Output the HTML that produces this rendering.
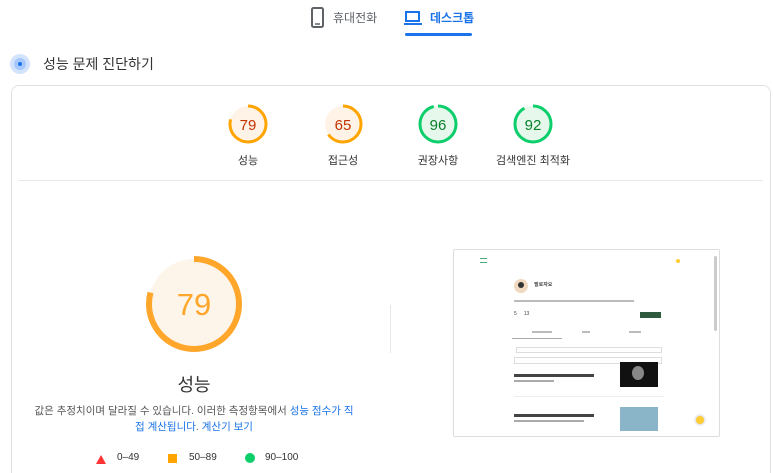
<!DOCTYPE html>
<html><head><meta charset="utf-8"><style>
*{margin:0;padding:0;box-sizing:border-box}
html,body{width:773px;height:473px;overflow:hidden}
body{background:#fff;font-family:"Liberation Sans","Noto Sans CJK KR",sans-serif;color:#202124;position:relative}
.a{position:absolute}
.g text{font-family:"Liberation Sans",sans-serif}
.lbl{position:absolute;font-size:11px;color:#333;width:100px;text-align:center}
</style></head><body>
<svg class="a" style="left:310px;top:7px" width="16" height="22" viewBox="0 0 16 22"><rect x="2" y="1" width="11" height="19" rx="1.5" fill="none" stroke="#5f6368" stroke-width="2"/><line x1="5" y1="17" x2="10" y2="17" stroke="#5f6368" stroke-width="1.5"/></svg>
<div class="a" style="left:333px;top:9px;font-size:12px;color:#5f6368">휴대전화</div>
<svg class="a" style="left:404px;top:10px" width="18" height="16" viewBox="0 0 18 16"><rect x="2" y="2" width="13" height="9" fill="none" stroke="#1a73e8" stroke-width="2"/><line x1="0" y1="14" x2="18" y2="14" stroke="#1a73e8" stroke-width="2"/></svg>
<div class="a" style="left:430px;top:9px;font-size:12px;color:#1a73e8;font-weight:bold">데스크톱</div>
<div class="a" style="left:405px;top:33px;width:67px;height:3px;background:#1a73e8;border-radius:2px"></div>
<svg class="a" style="left:9px;top:53px" width="22" height="22"><circle cx="11" cy="11" r="10" fill="#d2e3fc"/><circle cx="11" cy="11" r="6" fill="#a8c7fa"/><circle cx="11" cy="11" r="2" fill="#1a73e8"/></svg>
<div class="a" style="left:43px;top:54px;font-size:14px;color:#333">성능 문제 진단하기</div>
<div class="a" style="left:11px;top:85px;width:760px;height:398px;border:1px solid #e0e0e0;border-radius:8px"></div>
<div class="a" style="left:18px;top:180px;width:745px;height:1px;background:#e8e8e8"></div>
<svg class="a g" style="left:0;top:0" width="773" height="473">
<g transform="translate(248,124)"><circle r="18" fill="#fef3e6"/><circle r="18" fill="none" stroke="#ffa400" stroke-width="3" stroke-dasharray="89.4 200" transform="rotate(-90)"/><text y="6" text-anchor="middle" font-size="15" fill="#c33300">79</text></g>
<g transform="translate(343,124)"><circle r="18" fill="#fef3e6"/><circle r="18" fill="none" stroke="#ffa400" stroke-width="3" stroke-dasharray="73.5 200" transform="rotate(-90)"/><text y="6" text-anchor="middle" font-size="15" fill="#c33300">65</text></g>
<g transform="translate(438,124)"><circle r="18" fill="#e6f7ec"/><circle r="18" fill="none" stroke="#0cce6b" stroke-width="3" stroke-dasharray="108.6 200" transform="rotate(-90)"/><text y="6" text-anchor="middle" font-size="15" fill="#08802c">96</text></g>
<g transform="translate(533,124)"><circle r="18" fill="#e6f7ec"/><circle r="18" fill="none" stroke="#0cce6b" stroke-width="3" stroke-dasharray="104 200" transform="rotate(-90)"/><text y="6" text-anchor="middle" font-size="15" fill="#08802c">92</text></g>
<g transform="translate(194,304)"><circle r="45" fill="#fef5ea"/><circle r="45" fill="none" stroke="#ffa62b" stroke-width="6" stroke-dasharray="223.4 400" transform="rotate(-90)"/><text y="11" text-anchor="middle" font-size="31" fill="#ffa62b">79</text></g>
<polygon points="96,464 101,455 106,464" fill="#ff3333"/>
<rect x="168" y="454" width="9" height="9" fill="#ffa400"/>
<circle cx="250" cy="458" r="5" fill="#0cce6b"/>
</svg>
<div class="lbl" style="left:198px;top:152px">성능</div>
<div class="lbl" style="left:293px;top:152px">접근성</div>
<div class="lbl" style="left:388px;top:152px">권장사항</div>
<div class="lbl" style="left:483px;top:152px">검색엔진 최적화</div>
<div class="a" style="left:94px;top:371px;width:200px;text-align:center;font-size:18px;color:#333">성능</div>
<div class="a" style="left:24px;top:403px;width:340px;text-align:center;font-size:10.5px;line-height:16px;color:#555;white-space:nowrap">값은 추정치이며 달라질 수 있습니다. 이러한 측정항목에서 <span style="color:#1a73e8">성능 점수가 직</span><br><span style="color:#1a73e8">접 계산됩니다</span>. <span style="color:#1a73e8">계산기 보기</span></div>
<div class="a" style="left:117px;top:452px;font-size:10px;color:#333">0–49</div>
<div class="a" style="left:189px;top:452px;font-size:10px;color:#333">50–89</div>
<div class="a" style="left:265px;top:452px;font-size:10px;color:#333">90–100</div>
<div class="a" style="left:390px;top:305px;width:1px;height:48px;background:#e8e8e8"></div>
<div class="a" style="left:453px;top:249px;width:267px;height:188px;border:1px solid #ddd;border-radius:2px;background:#fff;overflow:hidden;font-size:4px;color:#444">
<div class="a" style="left:26px;top:8px;width:7px;height:5px;border-top:1px solid #4a7;border-bottom:1px solid #4a7"></div>
<div class="a" style="left:222px;top:9px;width:4px;height:4px;border-radius:50%;background:#fc3"></div>
<div class="a" style="left:260px;top:6px;width:3px;height:75px;background:#ccc;border-radius:2px"></div>
<div class="a" style="left:60px;top:29px;width:14px;height:14px;border-radius:50%;background:#f0d9c0"></div><div class="a" style="left:64px;top:32px;width:6px;height:6px;border-radius:50%;background:#333"></div>
<div class="a" style="left:80px;top:31px;font-size:5px;font-weight:bold">필로자요</div>
<div class="a" style="left:60px;top:50px;width:120px;height:2px;background:#bbb"></div>
<div class="a" style="left:60px;top:61px;font-size:5px">5&nbsp;&nbsp;&nbsp;&nbsp;&nbsp;13</div>
<div class="a" style="left:186px;top:62px;width:21px;height:6px;background:#2d5a3d"></div>
<div class="a" style="left:78px;top:81px;width:20px;height:2px;background:#bbb"></div>
<div class="a" style="left:128px;top:81px;width:8px;height:2px;background:#bbb"></div>
<div class="a" style="left:175px;top:81px;width:12px;height:2px;background:#bbb"></div>
<div class="a" style="left:58px;top:88px;width:50px;height:1px;background:#aaa"></div>
<div class="a" style="left:62px;top:97px;width:146px;height:6px;border:1px solid #ddd"></div>
<div class="a" style="left:60px;top:107px;width:148px;height:7px;border:1px solid #ddd"></div>
<div class="a" style="left:60px;top:124px;width:80px;height:3px;background:#444"></div>
<div class="a" style="left:60px;top:130px;width:40px;height:2px;background:#aaa"></div>
<div class="a" style="left:166px;top:112px;width:38px;height:25px;background:#111"></div><div class="a" style="left:178px;top:116px;width:12px;height:14px;border-radius:50%;background:#888"></div>
<div class="a" style="left:60px;top:146px;width:150px;height:1px;background:#eee"></div>
<div class="a" style="left:60px;top:164px;width:80px;height:3px;background:#444"></div>
<div class="a" style="left:60px;top:170px;width:70px;height:2px;background:#aaa"></div>
<div class="a" style="left:166px;top:157px;width:38px;height:24px;background:#8ab4c8"></div>
<div class="a" style="left:242px;top:166px;width:8px;height:8px;border-radius:50%;background:#fc3;box-shadow:0 0 3px #aaa"></div>
</div>
</body></html>
